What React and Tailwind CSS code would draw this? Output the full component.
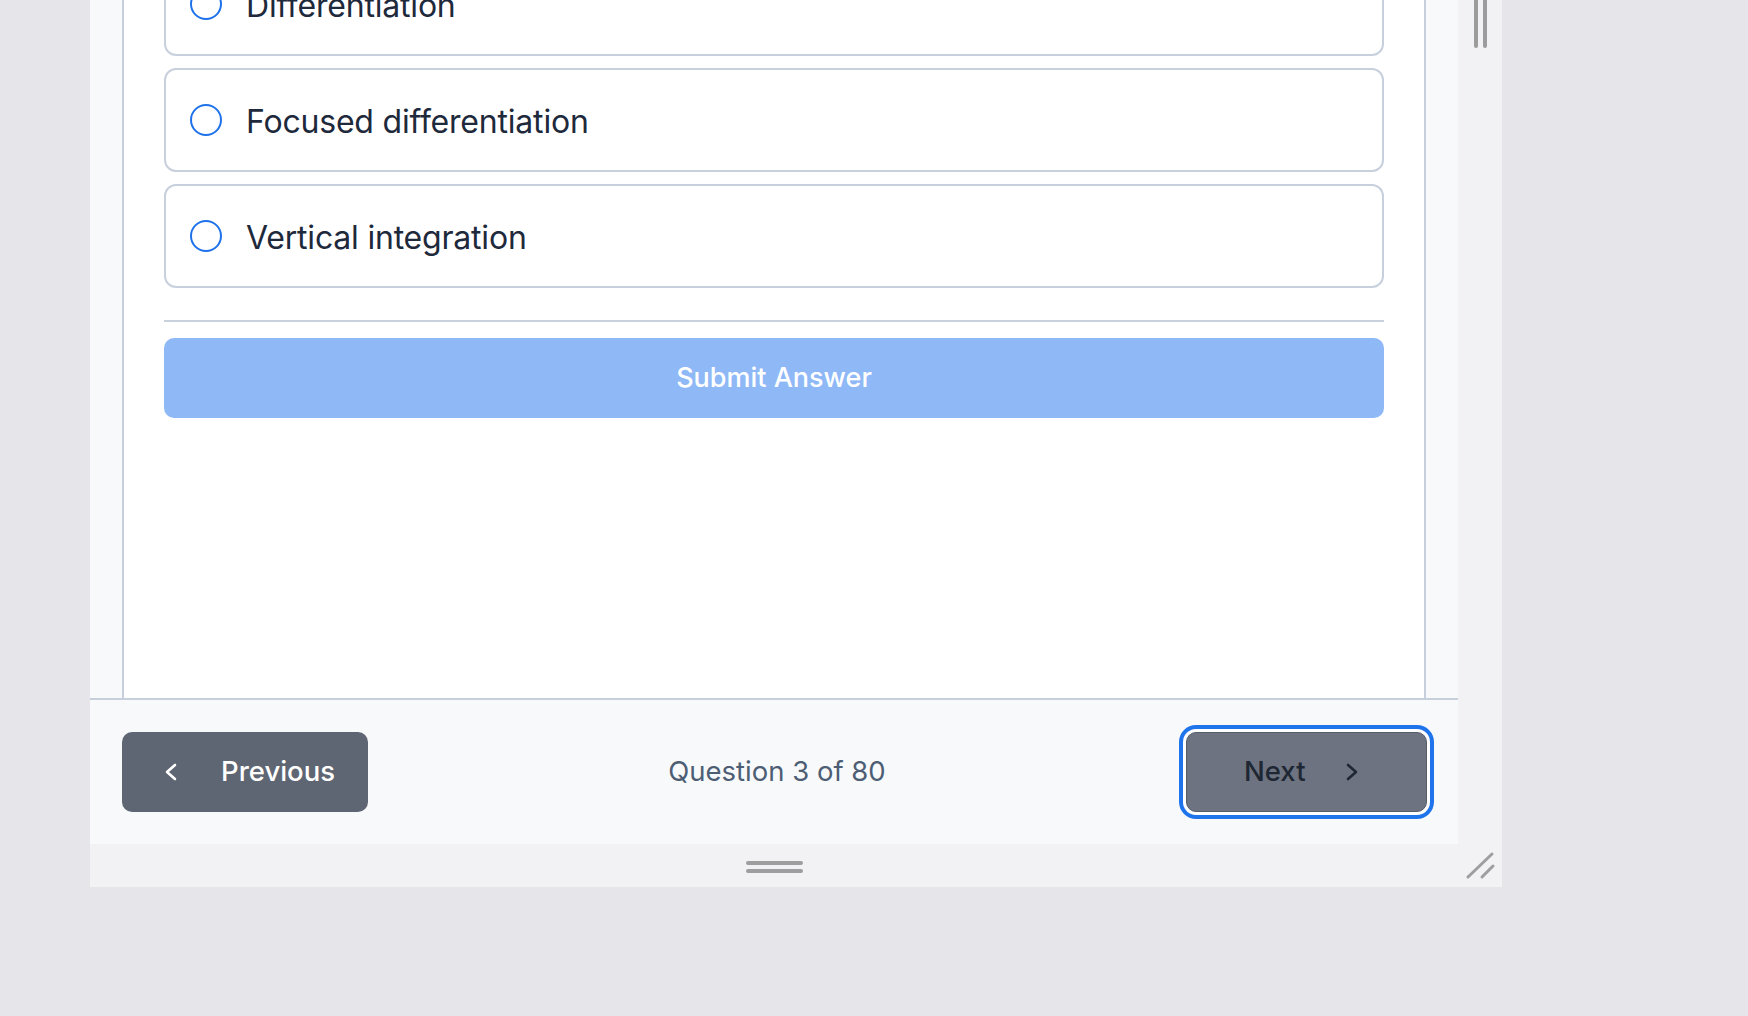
const options = ['Differentiation', 'Focused differentiation', 'Vertical integration']

function Radio() {
  return <span className="w-8 h-8 shrink-0 rounded-full border-2 border-[#1f72ea] bg-white" />
}

function OptionCard({ label }) {
  return (
    <div className="h-[104px] flex items-center gap-6 px-6 rounded-xl border-2 border-[#c7d0dc] bg-white">
      <Radio />
      <span className="text-[32px] leading-none tracking-[-0.2px] text-[#1e293b] pt-[3px]">{label}</span>
    </div>
  )
}

function ChevronLeft({ className }) {
  return (
    <svg width="14" height="20" viewBox="0 0 14 20" className={className} fill="none">
      <polyline points="11,3 3,10 11,17" stroke="currentColor" strokeWidth="2.6" strokeLinecap="round" strokeLinejoin="round" />
    </svg>
  )
}

function ChevronRight({ className }) {
  return (
    <svg width="14" height="20" viewBox="0 0 14 20" className={className} fill="none">
      <polyline points="3,3 11,10 3,17" stroke="currentColor" strokeWidth="2.6" strokeLinecap="round" strokeLinejoin="round" />
    </svg>
  )
}

export default function App() {
  return (
    <div className="min-h-screen w-full bg-[#e6e5ea] font-['Inter','Noto_Sans',sans-serif]">
      <div className="ml-[90px] w-[1412px] h-[887px] bg-[#f2f1f4] grid grid-cols-[1368px_44px] grid-rows-[844px_43px] overflow-hidden">
        {/* main column */}
        <div className="flex flex-col bg-[#f8f9fb] min-h-0">
          <div className="flex-1 min-h-0 px-8 flex">
            <div className="flex-1 bg-white border-x-2 border-[#c6cfdb] px-10 overflow-hidden">
              <div className="-mt-[48px] flex flex-col gap-3">
                {options.map((o) => (
                  <OptionCard key={o} label={o} />
                ))}
              </div>
              <div className="mt-8 h-[2px] bg-[#c8d1dc]" />
              <button className="mt-4 w-full h-[80px] rounded-[10px] bg-[#8fb8f7] text-white text-[27px] font-medium">
                Submit Answer
              </button>
            </div>
          </div>
          <div className="h-[146px] shrink-0 border-t-2 border-[#c6cfdb] px-8 flex items-center justify-between">
            <button className="w-[246px] h-[80px] rounded-[10px] bg-[#5f6673] text-white text-[27.5px] font-medium flex items-center pl-[42px] gap-[43px]">
              <ChevronLeft />
              <span>Previous</span>
            </button>
            <span className="text-[27.5px] text-[#4d5e74]">Question 3 of 80</span>
            <button className="w-[241px] h-[80px] mr-[-1px] rounded-[10px] bg-[#6d7380] border border-[#565d69] text-[#1e2733] text-[27.5px] font-medium flex items-center pl-[57px] gap-[39px] shadow-[0_0_0_3px_#ffffff,0_0_0_7px_#1f74ec]">
              <span>Next</span>
              <ChevronRight />
            </button>
          </div>
        </div>

        {/* right gutter */}
        <div className="flex justify-center gap-[5px]">
          <span className="w-1 h-[48px] rounded-b-full bg-[#9c9c9c]" />
          <span className="w-1 h-[48px] rounded-b-full bg-[#9c9c9c]" />
        </div>

        {/* bottom gutter */}
        <div className="flex flex-col items-center pt-[17px] gap-[4px]">
          <span className="w-[57px] h-[4px] rounded-full bg-[#9e9e9e]" />
          <span className="w-[57px] h-[4px] rounded-full bg-[#9e9e9e]" />
        </div>
        <div>
          <svg width="44" height="43" viewBox="0 0 44 43" fill="none">
            <line x1="10" y1="33" x2="34" y2="10" stroke="#9e9e9e" strokeWidth="3" strokeLinecap="round" />
            <line x1="24" y1="33" x2="35" y2="22" stroke="#9e9e9e" strokeWidth="3" strokeLinecap="round" />
          </svg>
        </div>
      </div>
    </div>
  )
}
